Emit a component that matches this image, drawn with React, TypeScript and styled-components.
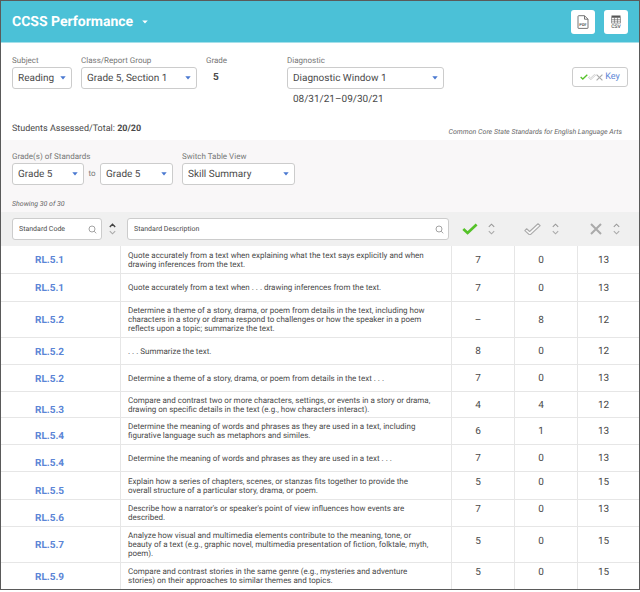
import React from "react";
import styled, { createGlobalStyle, css } from "styled-components";

const GlobalStyle = createGlobalStyle`
  *, *::before, *::after { box-sizing: border-box; }
  body {
    margin: 0;
    background: #fff;
    color: #4a4a4a;
    font-family: Roboto, "Liberation Sans", sans-serif;
    font-size: 8px;
    text-rendering: geometricPrecision;
  }
  button, input, select { font-family: inherit; text-rendering: inherit; }
`;

const Frame = styled.main`
  border: 1px solid #5a5a5a;
  background: #fff;
`;

const Header = styled.header`
  display: flex;
  align-items: center;
  justify-content: space-between;
  height: 42px;
  padding: 0 11px;
  background: #4bc1d7;
  border-bottom: 1px solid #a5e0ea;
`;

const Title = styled.h1`
  margin: 0;
  font-size: 14px;
  line-height: 20px;
  font-weight: 700;
`;

const TitleButton = styled.button`
  display: flex;
  align-items: center;
  gap: 9px;
  padding: 0;
  border: 0;
  background: none;
  color: #fff;
  font: inherit;
`;

const Exports = styled.div`
  display: flex;
  gap: 9px;
`;

const ExportButton = styled.button`
  display: flex;
  align-items: center;
  justify-content: center;
  width: 24px;
  height: 24px;
  padding: 0;
  border: 0;
  border-radius: 3px;
  background: #fff;
`;

const Filters = styled.section`
  display: flex;
  align-items: flex-start;
  padding: 12px 11px 0;
  height: 76px;
`;

const Field = styled.div<{ $width: number; $gap?: number }>`
  width: ${(p) => p.$width}px;
  margin-right: ${(p) => p.$gap ?? 9}px;
`;

const labelText = css`
  display: block;
  height: 12px;
  font-size: 8px;
  line-height: 12px;
  color: #777;
  white-space: nowrap;
`;

const Label = styled.label`
  ${labelText}
`;

const Caption = styled.span`
  ${labelText}
`;

const SelectBox = styled.div`
  position: relative;
  height: 22px;
`;

const Select = styled.select`
  width: 100%;
  height: 22px;
  padding: 0 16px 0 5px;
  appearance: none;
  border: 1px solid #ccc;
  border-radius: 3px;
  background: #fff;
  color: #4a4a4a;
  font-size: 10px;
`;

const SelectArrow = styled.svg`
  position: absolute;
  right: 6px;
  top: 9px;
  pointer-events: none;
`;

const GradeValue = styled.strong`
  display: block;
  padding-left: 7px;
  font-size: 10px;
  line-height: 22px;
`;

const DateRange = styled.span`
  display: block;
  padding-left: 6px;
  font-size: 10px;
  line-height: 22px;
`;

const KeyButton = styled.button`
  display: flex;
  align-items: center;
  justify-content: center;
  gap: 2px;
  width: 56px;
  height: 20px;
  margin: 12px 0 0 auto;
  padding: 0;
  border: 1px solid #ccc;
  border-radius: 3px;
  background: #fff;
  color: #5b85d6;
  font-size: 9px;
`;

const KeyIcons = styled.span`
  display: flex;
  align-items: center;
`;

const Summary = styled.section`
  display: flex;
  justify-content: space-between;
  height: 21px;
  padding: 0 17px 0 11px;
`;

const Assessed = styled.p`
  margin: 0;
  font-size: 9px;
  line-height: 20px;
`;

const Note = styled.p`
  margin: 0;
  padding-top: 6px;
  font-size: 7px;
  line-height: 14px;
  font-style: italic;
  color: #666;
`;

const TableTools = styled.section`
  height: 72px;
  padding: 11px 11px 0;
  background: #f9f7f8;
`;

const ToolRow = styled.div`
  display: flex;
  align-items: flex-end;
`;

const To = styled.span`
  width: 16px;
  font-size: 8px;
  line-height: 22px;
  text-align: center;
  color: #777;
`;

const Showing = styled.p`
  margin: 0;
  padding-top: 12px;
  font-size: 7px;
  line-height: 14px;
  font-style: italic;
  color: #666;
`;

const Table = styled.table`
  width: 100%;
  table-layout: fixed;
  border-spacing: 0;
`;

const Col = styled.col<{ $width?: number }>`
  width: ${(p) => (p.$width ? `${p.$width}px` : "auto")};
`;

const HeadCell = styled.th`
  height: 34px;
  padding: 0;
  background: #f0f0f0;
  font-weight: 400;
`;

const HeadRow = styled.div<{ $left: number; $right: number; $gap: number }>`
  display: flex;
  align-items: center;
  gap: ${(p) => p.$gap}px;
  padding: 0 ${(p) => p.$right}px 0 ${(p) => p.$left}px;
`;

const SearchBox = styled.div`
  position: relative;
  flex: 1;
  height: 22px;
`;

const SearchInput = styled.input`
  display: block;
  width: 100%;
  height: 22px;
  padding: 0 18px 0 6px;
  border: 1px solid #ccc;
  border-radius: 3px;
  background: #fff;
  color: #4a4a4a;
  font-size: 7px;
  &::placeholder { color: #4a4a4a; opacity: 1; }
`;

const SearchIcon = styled.svg`
  position: absolute;
  right: 5px;
  top: 7px;
`;

const SortButton = styled.button`
  display: flex;
  padding: 0;
  border: 0;
  background: none;
`;

const Row = styled.tr<{ $height: number }>`
  height: ${(p) => p.$height}px;
  &:last-child td { border-bottom: 0; }
`;

const Cell = styled.td`
  padding: 0;
  border-right: 1px solid #e6e6e6;
  border-bottom: 1px solid #e6e6e6;
  vertical-align: middle;
  &:last-child { border-right: 0; }
`;

const CodeCell = styled(Cell)<{ $low?: boolean }>`
  padding: ${(p) => (p.$low ? "12px" : "3px")} 0 0 34px;
  line-height: 12px;
`;

const CodeLink = styled.a`
  color: #5b85d6;
  font-size: 10px;
  font-weight: 700;
  text-decoration: none;
`;

const TextCell = styled(Cell)`
  padding-left: 7px;
  font-size: 8px;
  line-height: 9px;
  white-space: pre-line;
`;

const CountCell = styled(Cell)<{ $high?: boolean }>`
  padding: ${(p) => (p.$high ? "0 10px 6px 0" : "2px 10px 0 0")};
  font-size: 10px;
  line-height: 12px;
  text-align: center;
`;

function Arrow() {
  return (
    <SelectArrow width="6" height="4" viewBox="0 0 6 4" aria-hidden="true">
      <path d="M.3.3h5.4L3 3.6z" fill="#4a78d0" />
    </SelectArrow>
  );
}

function Dropdown({ id, label, options }: { id: string; label?: string; options: string[] }) {
  return (
    <SelectBox>
      <Select id={id} aria-label={label}>
        {options.map((o) => <option key={o}>{o}</option>)}
      </Select>
      <Arrow />
    </SelectBox>
  );
}

function Check({ width }: { width: number }) {
  return (
    <svg width={width} height={width * 0.75} viewBox="0 0 16 12" aria-hidden="true">
      <path d="M1.3 6 5.6 10 14.6 1.6" fill="none" stroke="#55c229" strokeWidth="2.7" />
    </svg>
  );
}

function HollowCheck({ width }: { width: number }) {
  return (
    <svg width={width} height={width * 0.75} viewBox="0 0 16 12" aria-hidden="true">
      <path
        d="M.8 7.2 2.5 5.4 5.3 8 13.2.7 15.2 2.5 5.5 11.5Z"
        fill="#f8f8f8"
        stroke="#aaa"
        strokeWidth="1"
        strokeLinejoin="round"
      />
    </svg>
  );
}

function Cross({ width }: { width: number }) {
  return (
    <svg width={width} height={width} viewBox="0 0 12 12" aria-hidden="true">
      <path d="M1 1 11 11M11 1 1 11" stroke="#aaa" strokeWidth="2" />
    </svg>
  );
}

function Magnifier() {
  return (
    <SearchIcon width="9" height="9" viewBox="0 0 9 9" fill="none" stroke="#999" aria-hidden="true">
      <circle cx="4" cy="4" r="3" strokeWidth=".9" />
      <path d="M6.2 6.2 8.2 8.3" strokeWidth=".9" />
    </SearchIcon>
  );
}

function Sort({ name, ascending }: { name: string; ascending?: boolean }) {
  return (
    <SortButton aria-label={`Sort by ${name}`}>
      <svg width="7" height="12" viewBox="0 0 7 12" fill="none" strokeWidth="1.1" aria-hidden="true">
        <path d="M.8 3.9 3.5 1.2 6.2 3.9" stroke={ascending ? "#444" : "#999"} strokeWidth={ascending ? 1.4 : 1.1} />
        <path d="M.8 8.1 3.5 10.8 6.2 8.1" stroke="#aaa" />
      </svg>
    </SortButton>
  );
}

function PdfIcon() {
  return (
    <svg width="12" height="14" viewBox="0 0 12 14" fill="none" stroke="#666" strokeWidth=".9" aria-hidden="true">
      <path d="M1 13V1.5q0-.8.8-.8H7.5L11 4.2V13q0 .4-.5.4H1.5Q1 13.4 1 13zM7.5.8V4.2H11" />
      <text x="6" y="10.8" textAnchor="middle" fontSize="4" fontWeight="700" fill="#555" stroke="none">PDF</text>
    </svg>
  );
}

function CsvIcon() {
  return (
    <svg width="12" height="14" viewBox="0 0 12 14" fill="none" aria-hidden="true">
      <path d="M1.5.5h9v2h-9z" fill="#555" />
      <path d="M1.5 2.5h9v5.6h-9zM1.5 4.4h9M1.5 6.2h9M4.5 2.5v5.6M7.5 2.5v5.6" stroke="#666" strokeWidth=".6" />
      <text x="6" y="13" textAnchor="middle" fontSize="5" fontWeight="500" fill="#555">CSV</text>
    </svg>
  );
}

interface Standard {
  code: string;
  text: string;
  counts: [string, string, string];
  height: number;
  low?: boolean;
  high?: boolean;
}

const standards: Standard[] = [
  { code: "RL.5.1", text: "Quote accurately from a text when explaining what the text says explicitly and when\ndrawing inferences from the text.", counts: ["7", "0", "13"], height: 28 },
  { code: "RL.5.1", text: "Quote accurately from a text when . . . drawing inferences from the text.", counts: ["7", "0", "13"], height: 28 },
  { code: "RL.5.2", text: "Determine a theme of a story, drama, or poem from details in the text, including how\ncharacters in a story or drama respond to challenges or how the speaker in a poem\nreflects upon a topic; summarize the text.", counts: ["–", "8", "12"], height: 36 },
  { code: "RL.5.2", text: ". . . Summarize the text.", counts: ["8", "0", "12"], height: 27 },
  { code: "RL.5.2", text: "Determine a theme of a story, drama, or poem from details in the text . . .", counts: ["7", "0", "13"], height: 27 },
  { code: "RL.5.3", text: "Compare and contrast two or more characters, settings, or events in a story or drama,\ndrawing on specific details in the text (e.g., how characters interact).", counts: ["4", "4", "12"], height: 26, low: true },
  { code: "RL.5.4", text: "Determine the meaning of words and phrases as they are used in a text, including\nfigurative language such as metaphors and similes.", counts: ["6", "1", "13"], height: 27, low: true },
  { code: "RL.5.4", text: "Determine the meaning of words and phrases as they are used in a text . . .", counts: ["7", "0", "13"], height: 27, low: true },
  { code: "RL.5.5", text: "Explain how a series of chapters, scenes, or stanzas fits together to provide the\noverall structure of a particular story, drama, or poem.", counts: ["5", "0", "15"], height: 28, low: true, high: true },
  { code: "RL.5.6", text: "Describe how a narrator's or speaker's point of view influences how events are\ndescribed.", counts: ["7", "0", "13"], height: 27, low: true, high: true },
  { code: "RL.5.7", text: "Analyze how visual and multimedia elements contribute to the meaning, tone, or\nbeauty of a text (e.g., graphic novel, multimedia presentation of fiction, folktale, myth,\npoem).", counts: ["5", "0", "15"], height: 36, high: true },
  { code: "RL.5.9", text: "Compare and contrast stories in the same genre (e.g., mysteries and adventure\nstories) on their approaches to similar themes and topics.", counts: ["5", "0", "15"], height: 26, high: true },
];

export default function App() {
  return (
    <>
      <GlobalStyle />
      <Frame>
        <Header>
          <Title>
            <TitleButton>
              CCSS Performance
              <svg width="6" height="4" viewBox="0 0 6 4" aria-hidden="true">
                <path d="M.2.4h5.6L3 3.6z" fill="#fff" />
              </svg>
            </TitleButton>
          </Title>
          <Exports>
            <ExportButton aria-label="Export PDF"><PdfIcon /></ExportButton>
            <ExportButton aria-label="Export CSV"><CsvIcon /></ExportButton>
          </Exports>
        </Header>

        <Filters>
          <Field $width={60}>
            <Label htmlFor="subject">Subject</Label>
            <Dropdown id="subject" options={["Reading"]} />
          </Field>
          <Field $width={116}>
            <Label htmlFor="group">Class/Report Group</Label>
            <Dropdown id="group" options={["Grade 5, Section 1"]} />
          </Field>
          <Field $width={72}>
            <Caption>Grade</Caption>
            <GradeValue>5</GradeValue>
          </Field>
          <Field $width={157}>
            <Label htmlFor="diagnostic">Diagnostic</Label>
            <Dropdown id="diagnostic" options={["Diagnostic Window 1"]} />
            <DateRange>08/31/21–09/30/21</DateRange>
          </Field>
          <KeyButton>
            <KeyIcons>
              <Check width={8} />
              <HollowCheck width={8} />
              <Cross width={7} />
            </KeyIcons>
            Key
          </KeyButton>
        </Filters>

        <Summary>
          <Assessed>Students Assessed/Total: <strong>20/20</strong></Assessed>
          <Note>Common Core State Standards for English Language Arts</Note>
        </Summary>

        <TableTools>
          <ToolRow>
            <Field $width={72} $gap={0}>
              <Label htmlFor="grade-from">Grade(s) of Standards</Label>
              <Dropdown id="grade-from" options={["Grade 5"]} />
            </Field>
            <To>to</To>
            <Field $width={73}>
              <Dropdown id="grade-to" label="Highest grade of standards" options={["Grade 5"]} />
            </Field>
            <Field $width={113}>
              <Label htmlFor="view">Switch Table View</Label>
              <Dropdown id="view" options={["Skill Summary"]} />
            </Field>
          </ToolRow>
          <Showing>Showing 30 of 30</Showing>
        </TableTools>

        <Table>
          <colgroup>
            <Col $width={120} />
            <Col />
            <Col $width={63} />
            <Col $width={63} />
            <Col $width={61} />
          </colgroup>
          <thead>
            <tr>
              <HeadCell scope="col">
                <HeadRow $left={11} $right={5} $gap={7}>
                  <SearchBox>
                    <SearchInput aria-label="Standard Code" placeholder="Standard Code" />
                    <Magnifier />
                  </SearchBox>
                  <Sort name="standard code" ascending />
                </HeadRow>
              </HeadCell>
              <HeadCell scope="col">
                <HeadRow $left={6} $right={3} $gap={0}>
                  <SearchBox>
                    <SearchInput aria-label="Standard Description" placeholder="Standard Description" />
                    <Magnifier />
                  </SearchBox>
                </HeadRow>
              </HeadCell>
              <HeadCell scope="col" aria-label="Met">
                <HeadRow $left={10} $right={0} $gap={10}><Check width={16} /><Sort name="met" /></HeadRow>
              </HeadCell>
              <HeadCell scope="col" aria-label="Partially met">
                <HeadRow $left={9} $right={0} $gap={11}><HollowCheck width={17} /><Sort name="partially met" /></HeadRow>
              </HeadCell>
              <HeadCell scope="col" aria-label="Not met">
                <HeadRow $left={12} $right={0} $gap={11}><Cross width={12} /><Sort name="not met" /></HeadRow>
              </HeadCell>
            </tr>
          </thead>
          <tbody>
            {standards.map((s, i) => (
              <Row key={i} $height={s.height}>
                <CodeCell $low={s.low}><CodeLink href="#">{s.code}</CodeLink></CodeCell>
                <TextCell>{s.text}</TextCell>
                {s.counts.map((count, c) => <CountCell key={c} $high={s.high}>{count}</CountCell>)}
              </Row>
            ))}
          </tbody>
        </Table>
      </Frame>
    </>
  );
}
